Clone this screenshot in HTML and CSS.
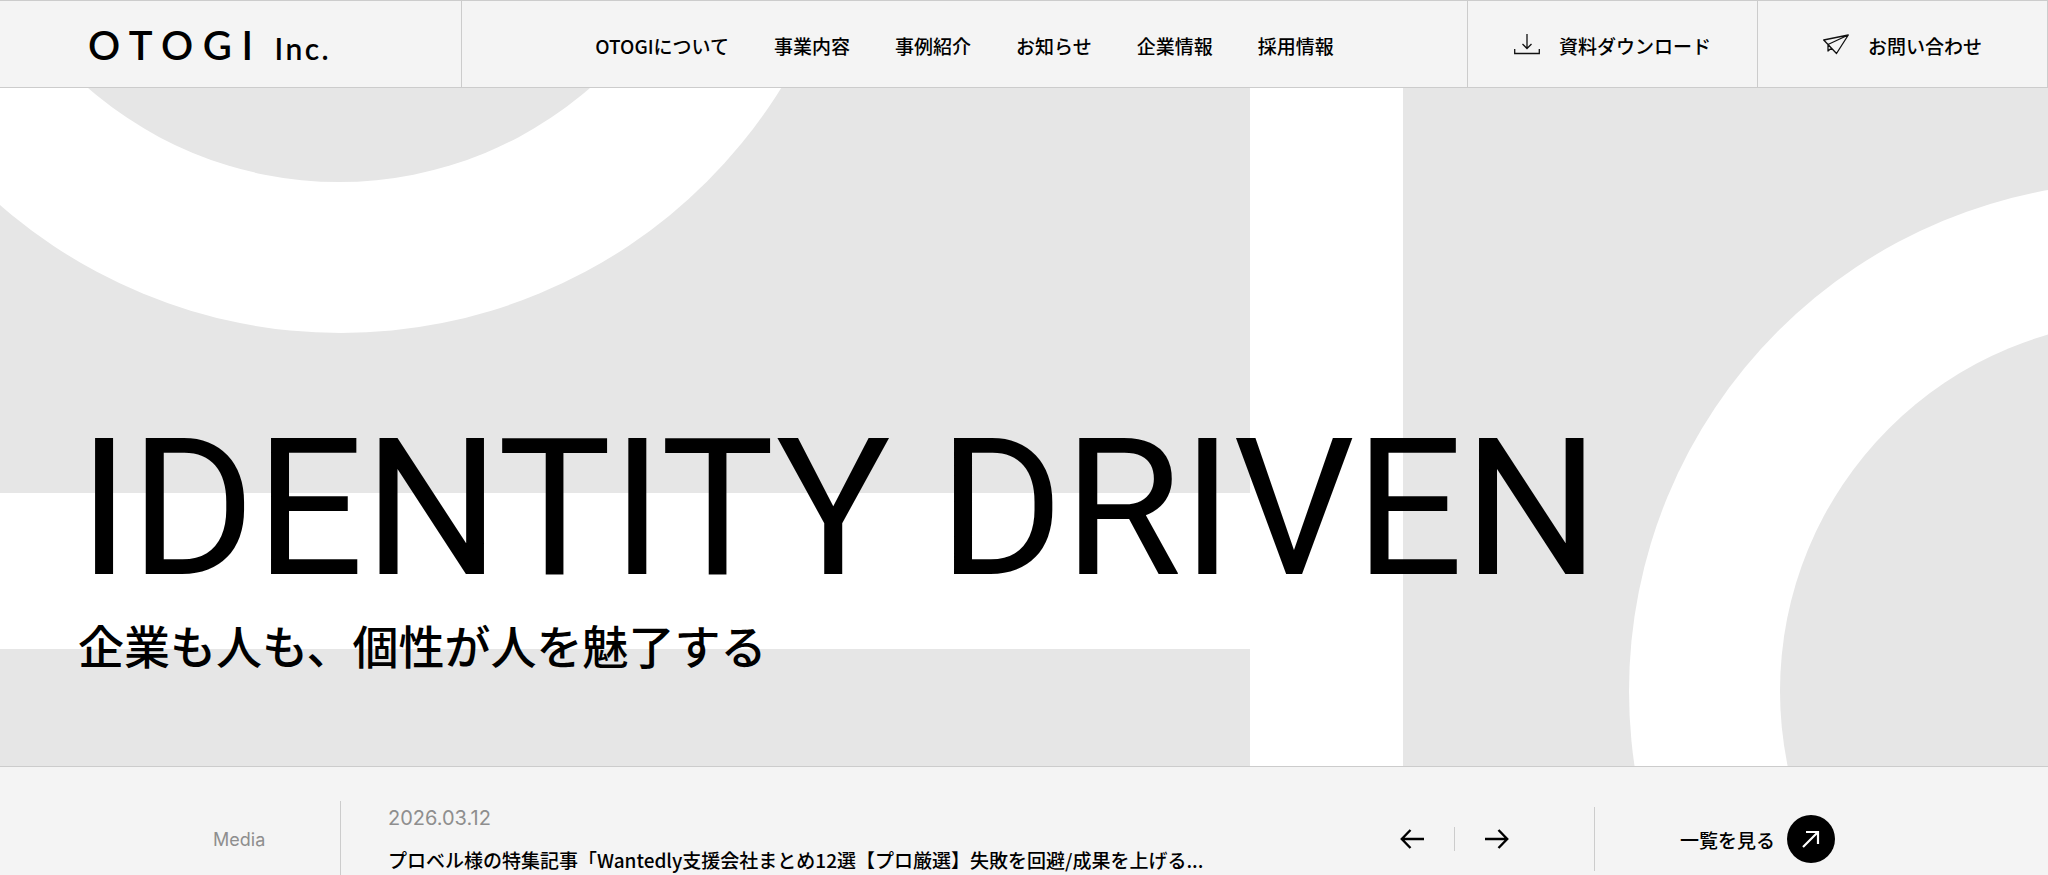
FILE: index.html
```html
<!DOCTYPE html>
<html lang="ja">

<head>
    <meta charset="UTF-8">
    <meta name="viewport" content="width=device-width, initial-scale=1.0">
    <title>OTOGI Inc.</title>
    <link rel="stylesheet" href="styles.css">
</head>

<body>
    <header class="header">
        <a class="logo" href="#">OTOGI <span class="logo-sub">Inc.</span></a>
        <nav class="nav">
            <a href="#about">OTOGIについて</a>
            <a href="#service">事業内容</a>
            <a href="#works">事例紹介</a>
            <a href="#news">お知らせ</a>
            <a href="#company">企業情報</a>
            <a href="#recruit">採用情報</a>
        </nav>
        <a class="header-link" href="#download">
            <svg width="26" height="22" viewBox="0 0 26 22" fill="none" stroke="#111" stroke-width="1.3">
                <path d="M13 0v14M8.500 10l4.500 4.500 4.500-4.500M.7 15v4.500h24.600v-4.500" />
            </svg>
            資料ダウンロード
        </a>
        <a class="header-link" href="#contact">
            <svg width="26" height="22" viewBox="0 0 26 22" fill="none" stroke="#111" stroke-width="1.3" stroke-linejoin="round">
                <path d="M25.300 1L.7 6L5 10.500L13.500 19.500ZM25.300 1L5 10.500V17l3.500-3" />
            </svg>
            お問い合わせ
        </a>
    </header>

    <main class="hero">
        <!-- 背景の大きな図形 -->
        <svg class="hero-bg" viewBox="0 0 2048 678" preserveAspectRatio="xMinYMin slice" aria-hidden="true">
            <circle cx="341" cy="-273" r="518" fill="#fff" />
            <circle cx="339" cy="-288" r="382" fill="#e6e6e6" />
            <path d="M0 405H1250V0H1403V678H1250V561H0Z" fill="#fff" />
            <circle cx="2138" cy="603" r="509" fill="#fff" />
            <circle cx="2151" cy="603" r="371" fill="#e6e6e6" />
        </svg>
        <h1 class="hero-title">IDENTITY DRIVEN</h1>
        <p class="hero-text">企業も人も、個性が人を魅了する</p>
    </main>

    <section class="news">
        <p class="news-label">Media</p>
        <a class="news-item" href="#media">
            <time class="news-date" datetime="2026-03-12">2026.03.12</time>
            <span class="news-title">プロベル様の特集記事「Wantedly支援会社まとめ12選【プロ厳選】失敗を回避/成果を上げる...</span>
        </a>
        <div class="news-control">
            <button type="button" aria-label="前へ">
                <svg width="24" height="20" viewBox="0 0 24 20" fill="none" stroke="#000" stroke-width="2.4">
                    <path d="M24 10H2M10.500 1L1.800 10l8.700 9" />
                </svg>
            </button>
            <button type="button" aria-label="次へ">
                <svg width="24" height="20" viewBox="0 0 24 20" fill="none" stroke="#000" stroke-width="2.4">
                    <path d="M0 10h22M13.500 1l8.700 9-8.700 9" />
                </svg>
            </button>
        </div>
        <a class="news-more" href="#list">
            一覧を見る
            <span class="circle">
                <svg width="18" height="18" viewBox="0 0 18 18" fill="none" stroke="#fff" stroke-width="2.2">
                    <path d="M1 17L16 2M4 2h12v12" />
                </svg>
            </span>
        </a>
    </section>
</body>

</html>
```
FILE: styles.css
```css
* {
    box-sizing: border-box;
}

body {
    margin: 0;
    background-color: #f4f4f4;
    color: #000;
    font-family: "Noto Sans CJK JP", sans-serif;
    font-size: 19px;
    font-weight: 500;
}

a {
    color: inherit;
    text-decoration: none;
}

p,
h1 {
    margin: 0;
}

svg {
    display: block;
    flex-shrink: 0;
}

/* ヘッダー */
.header {
    display: flex;
    height: 88px;
    border: 1px solid #ccc;
    border-left: none;
}

.logo {
    display: flex;
    align-items: baseline;
    width: 462px;
    padding: 20px 0 0 88px;
    border-right: 1px solid #ccc;
    font-family: Lato, sans-serif;
    font-size: 40px;
    font-weight: 600;
    line-height: 48px;
    letter-spacing: 0.24em;
}

.logo-sub {
    margin-left: 12px;
    font-size: 30px;
    letter-spacing: 0.08em;
}

.nav {
    flex: 1;
    display: flex;
    align-items: center;
    justify-content: center;
    gap: 45px;
    padding-top: 2px;
    white-space: nowrap;
}

.header-link {
    display: flex;
    align-items: center;
    justify-content: center;
    gap: 19px;
    width: 290px;
    padding-top: 2px;
    border-left: 1px solid #ccc;
    white-space: nowrap;
}

.nav a:hover,
.header-link:hover {
    opacity: 0.6;
}

/* メインビジュアル */
.hero {
    position: relative;
    display: flex;
    flex-direction: column;
    justify-content: flex-end;
    min-height: calc(100vh - 197px);
    padding: 0 78px 92px;
    background-color: #e6e6e6;
    overflow: hidden;
}

.hero-bg {
    position: absolute;
    top: 0;
    left: 0;
    width: 100%;
    height: 100%;
}

.hero-title {
    position: relative;
    font-family: Roboto, sans-serif;
    font-size: 191px;
    font-weight: 400;
    line-height: 192px;
}

.hero-text {
    position: relative;
    margin-top: 9px;
    font-size: 46px;
    line-height: 60px;
}

/* お知らせ */
.news {
    display: flex;
    align-items: center;
    padding: 34px 213px;
    border-top: 1px solid #ccc;
}

.news-label {
    display: flex;
    align-items: center;
    width: 128px;
    height: 76px;
    border-right: 1px solid #ccc;
    color: #8e8e8e;
    font-family: Inter, sans-serif;
    font-size: 18px;
    font-weight: 400;
}

.news-item {
    flex: 1;
    min-width: 0;
    padding: 0 47px;
}

.news-date {
    display: block;
    color: #8e8e8e;
    font-family: Inter, sans-serif;
    font-size: 20px;
    font-weight: 400;
    line-height: 32px;
}

.news-title {
    display: block;
    margin-top: 10px;
    line-height: 32px;
    white-space: nowrap;
    overflow: hidden;
    text-overflow: ellipsis;
}

.news-control {
    display: flex;
    align-items: center;
}

.news-control button {
    padding: 2px 0;
    border: none;
    background: none;
    cursor: pointer;
}

.news-control button:first-child {
    padding-right: 30px;
    border-right: 1px solid #ccc;
}

.news-control button:last-child {
    padding-left: 30px;
}

.news-more {
    display: flex;
    align-items: center;
    gap: 12px;
    height: 64px;
    margin-left: 85px;
    padding-left: 85px;
    border-left: 1px solid #ccc;
    white-space: nowrap;
}

.circle {
    display: flex;
    align-items: center;
    justify-content: center;
    width: 48px;
    height: 48px;
    border-radius: 50%;
    background-color: #000;
}
```
